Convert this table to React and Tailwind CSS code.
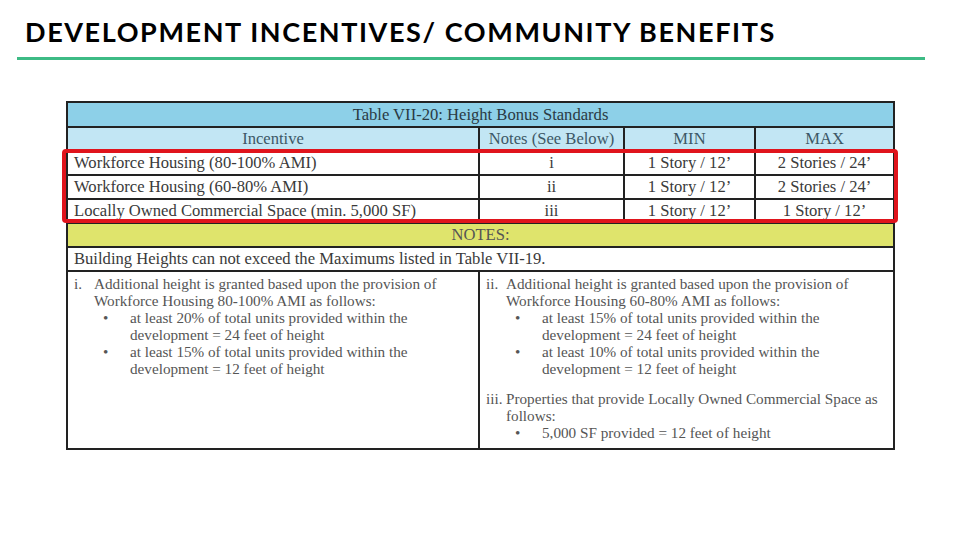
import React from 'react';

const rows = [
  { incentive: 'Workforce Housing (80-100% AMI)', note: 'i', min: '1 Story / 12’', max: '2 Stories / 24’' },
  { incentive: 'Workforce Housing (60-80% AMI)', note: 'ii', min: '1 Story / 12’', max: '2 Stories / 24’' },
  { incentive: 'Locally Owned Commercial Space (min. 5,000 SF)', note: 'iii', min: '1 Story / 12’', max: '1 Story / 12’' },
];

function Note({ num, children, bullets }) {
  return (
    <div className="flex">
      <span className="w-[20px] shrink-0">{num}</span>
      <div className="flex-1">
        <div>{children}</div>
        {bullets.map((b, i) => (
          <div key={i} className="flex">
            <span className="w-[36px] shrink-0 pl-[9px]">•</span>
            <span>{b}</span>
          </div>
        ))}
      </div>
    </div>
  );
}

export default function App() {
  const cell = 'border-2 border-[#222] h-[24px] p-0 leading-[20px] whitespace-nowrap';

  return (
    <div className="w-[960px] h-[538px] bg-white overflow-hidden" style={{ fontFamily: '"Liberation Serif", serif' }}>
      {/* Heading */}
      <div className="pl-[25px] pt-[15px] h-[57px]">
        <h1
          className="text-[27px] font-bold tracking-[1.6px] text-black leading-[34px]"
          style={{ fontFamily: 'Lato, "Open Sans", sans-serif' }}
        >
          DEVELOPMENT INCENTIVES/ COMMUNITY BENEFITS
        </h1>
      </div>
      <div className="ml-[17px] w-[908px] h-[3px] bg-[#3dbb85]" />

      {/* Table */}
      <div className="relative ml-[66px] mt-[41px] w-[827px]">
        <table className="border-collapse table-fixed w-[827px] text-[16.6px] text-[#3a3a3a]">
          <colgroup>
            <col className="w-[412px]" />
            <col className="w-[145px]" />
            <col className="w-[131px]" />
            <col className="w-[139px]" />
          </colgroup>
          <tbody>
            <tr className="bg-[#8dd0e8]">
              <td colSpan={4} className={`${cell} h-[25px] text-center text-[#2a3a44]`}>
                Table VII-20: Height Bonus Standards
              </td>
            </tr>
            <tr className="bg-[#c2e6f4] text-[#3d5866]">
              <td className={`${cell} text-center`}>Incentive</td>
              <td className={`${cell} text-center`}>Notes (See Below)</td>
              <td className={`${cell} text-center`}>MIN</td>
              <td className={`${cell} text-center`}>MAX</td>
            </tr>
            {rows.map((r) => (
              <tr key={r.note} className="bg-white">
                <td className={`${cell} pl-[6px]`}>{r.incentive}</td>
                <td className={`${cell} text-center`}>{r.note}</td>
                <td className={`${cell} text-center`}>{r.min}</td>
                <td className={`${cell} text-center`}>{r.max}</td>
              </tr>
            ))}
            <tr className="bg-[#dfe46c]">
              <td colSpan={4} className={`${cell} text-center text-[#555]`}>NOTES:</td>
            </tr>
            <tr className="bg-white">
              <td colSpan={4} className={`${cell} pl-[6px]`}>
                Building Heights can not exceed the Maximums listed in Table VII-19.
              </td>
            </tr>
            <tr className="bg-white text-[15.2px] leading-[17px] text-[#555] align-top whitespace-nowrap">
              <td className="border-2 border-[#222] h-[178px] pl-[6px] pt-[3px]">
                <Note
                  num="i."
                  bullets={[
                    <>at least 20% of total units provided within the<br />development = 24 feet of height</>,
                    <>at least 15% of total units provided within the<br />development = 12 feet of height</>,
                  ]}
                >
                  Additional height is granted based upon the provision of<br />
                  Workforce Housing 80-100% AMI as follows:
                </Note>
              </td>
              <td colSpan={3} className="border-2 border-[#222] pl-[6px] pt-[3px]">
                <Note
                  num="ii."
                  bullets={[
                    <>at least 15% of total units provided within the<br />development = 24 feet of height</>,
                    <>at least 10% of total units provided within the<br />development = 12 feet of height</>,
                  ]}
                >
                  Additional height is granted based upon the provision of<br />
                  Workforce Housing 60-80% AMI as follows:
                </Note>
                <div className="mt-[13px]">
                  <Note
                    num="iii."
                    bullets={[<>5,000 SF provided = 12 feet of height</>]}
                  >
                    Properties that provide Locally Owned Commercial Space as<br />
                    follows:
                  </Note>
                </div>
              </td>
            </tr>
          </tbody>
        </table>

        {/* highlight box */}
        <div className="absolute left-[-4px] top-[48px] w-[836px] h-[74px] border-4 border-[#e0141c] rounded-[4px] pointer-events-none" />
      </div>
    </div>
  );
}
